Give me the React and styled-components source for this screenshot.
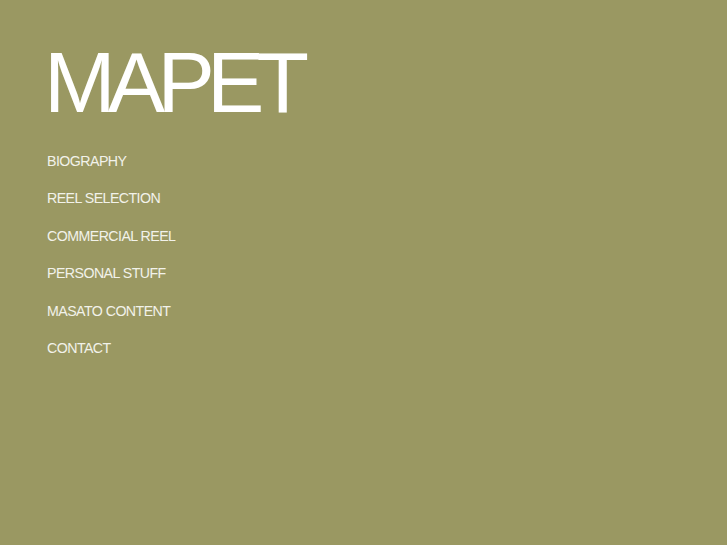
import styled, { createGlobalStyle } from "styled-components";

const Global = createGlobalStyle`
  html, body {
    margin: 0;
    padding: 0;
    background: #9a9862;
  }
  body {
    font-family: "Liberation Sans", Arial, sans-serif;
  }
`;

const Page = styled.div`
  min-height: 545px;
  background: #9a9862;
  padding: 37px 0 0 44px;
  box-sizing: border-box;
`;

const Logo = styled.h1`
  margin: 0;
  font-family: "Liberation Sans", Arial, sans-serif;
  font-weight: normal;
  font-size: 86px;
  line-height: 90px;
  letter-spacing: -7.8px;
  color: #ffffff;
`;

const Menu = styled.nav`
  display: flex;
  flex-direction: column;
  gap: 20.4px;
  margin-top: 26px;
  padding-left: 3px;
`;

const MenuLink = styled.a`
  font-size: 14.2px;
  line-height: 17px;
  letter-spacing: -0.55px;
  color: #f2f2ea;
  text-decoration: none;
  cursor: pointer;
`;

const items = [
  "BIOGRAPHY",
  "REEL SELECTION",
  "COMMERCIAL REEL",
  "PERSONAL STUFF",
  "MASATO CONTENT",
  "CONTACT",
];

export default function App() {
  return (
    <>
      <Global />
      <Page>
        <Logo>MAPET</Logo>
        <Menu>
          {items.map((it) => (
            <MenuLink key={it}>{it}</MenuLink>
          ))}
        </Menu>
      </Page>
    </>
  );
}
